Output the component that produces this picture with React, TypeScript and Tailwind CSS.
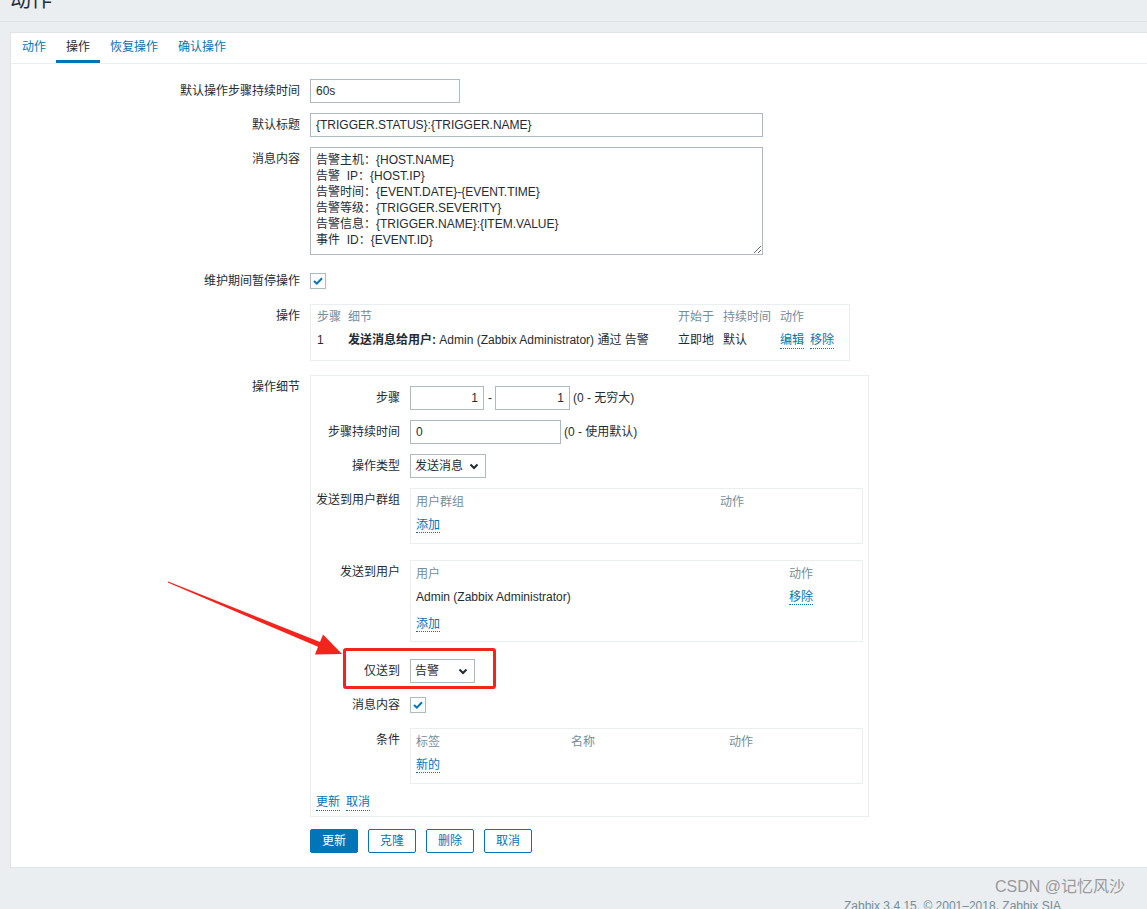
import React from "react";

function Chevron() {
  return (
    <svg width="10" height="7" viewBox="0 0 10 7" className="shrink-0">
      <path d="M1.5 1.5 L5 5 L8.5 1.5" fill="none" stroke="#1f2c33" strokeWidth="2" />
    </svg>
  );
}

function Check() {
  return (
    <div className="flex h-[16px] w-[16px] items-center justify-center border border-[#acbbc2] bg-white">
      <svg width="10" height="8" viewBox="0 0 10 8">
        <path d="M1 4 L3.8 6.6 L9 1.2" fill="none" stroke="#0275b8" strokeWidth="2" />
      </svg>
    </div>
  );
}

function A({ children }: { children: React.ReactNode }) {
  return <span className="border-b border-dotted border-[#0275b8] text-[#0275b8]">{children}</span>;
}

function Row({
  label,
  children,
  mb = "mb-[10px]",
}: {
  label: string;
  children: React.ReactNode;
  mb?: string;
}) {
  return (
    <div className={"flex " + mb}>
      <div className="w-[299px] shrink-0 pr-[10px] pt-[4px] text-right">{label}</div>
      <div>{children}</div>
    </div>
  );
}

function SubRow({
  label,
  children,
  mb = "mb-[10px]",
  extra,
}: {
  label: string;
  children: React.ReactNode;
  mb?: string;
  extra?: React.ReactNode;
}) {
  return (
    <div className={"relative flex " + mb}>
      {extra}
      <div className="w-[99px] shrink-0 pr-[10px] pt-[4px] text-right">{label}</div>
      <div>{children}</div>
    </div>
  );
}

const inputCls =
  "h-[24px] border border-[#acbbc2] bg-white px-[5px] text-[12px] text-[#1f2c33] outline-none";

export default function App() {
  const msg =
    "告警主机：{HOST.NAME}\n告警  IP：{HOST.IP}\n告警时间：{EVENT.DATE}-{EVENT.TIME}\n告警等级：{TRIGGER.SEVERITY}\n告警信息：{TRIGGER.NAME}:{ITEM.VALUE}\n事件  ID：{EVENT.ID}";

  return (
    <div className="relative h-[909px] w-[1147px] overflow-hidden bg-[#ebeef0] font-['Liberation_Sans','Noto_Sans_CJK_SC',sans-serif] text-[12px] leading-[16px] text-[#1f2c33]">
      <div className="flex h-[22px] items-start border-b border-[#dde3e6] pl-[10px]">
        <div className="-mt-[14px] text-[21px] leading-[26px]">动作</div>
      </div>

      <div className="ml-[10px] mt-[10px] w-[1160px] border border-[#dfe4e7] bg-white">
        <div className="flex h-[31px] border-b border-[#ebeef0] pl-[1px]">
          <div className="flex h-[30px] items-center border-b-[3px] border-transparent px-[10px] text-[#0275b8]">动作</div>
          <div className="flex h-[30px] items-center border-b-[3px] border-[#0275b8] px-[10px]">操作</div>
          <div className="flex h-[30px] items-center border-b-[3px] border-transparent px-[10px] text-[#0275b8]">恢复操作</div>
          <div className="flex h-[30px] items-center border-b-[3px] border-transparent px-[10px] text-[#0275b8]">确认操作</div>
        </div>

        <div className="pb-[14px] pt-[15px]">
          <Row label="默认操作步骤持续时间">
            <input readOnly defaultValue="60s" className={inputCls + " w-[150px]"} />
          </Row>
          <Row label="默认标题">
            <input readOnly defaultValue="{TRIGGER.STATUS}:{TRIGGER.NAME}" className={inputCls + " w-[453px]"} />
          </Row>
          <Row label="消息内容" mb="mb-[14px]">
            <textarea
              readOnly
              defaultValue={msg}
              className="block h-[108px] w-[453px] border border-[#acbbc2] bg-white px-[5px] py-[4px] text-[12px] leading-[16px] text-[#1f2c33] outline-none"
            />
          </Row>
          <Row label="维护期间暂停操作" mb="mb-[11px]">
            <div className="h-[24px] pt-[4px]">
              <Check />
            </div>
          </Row>
          <Row label="操作" mb="mb-[14px]">
            <div className="w-[540px] border border-[#ebeef0] pb-[11px] pl-[6px] pt-[4px]">
              <div className="grid grid-cols-[31px_330px_45px_57px_1fr] text-[#768d99]">
                <div>步骤</div>
                <div>细节</div>
                <div>开始于</div>
                <div>持续时间</div>
                <div>动作</div>
              </div>
              <div className="mt-[7px] grid grid-cols-[31px_330px_45px_57px_1fr]">
                <div>1</div>
                <div>
                  <span className="font-bold">发送消息给用户:</span> Admin (Zabbix Administrator) 通过 告警
                </div>
                <div>立即地</div>
                <div>默认</div>
                <div className="flex gap-[6px]">
                  <A>编辑</A>
                  <A>移除</A>
                </div>
              </div>
            </div>
          </Row>
          <Row label="操作细节" mb="mb-[12px]">
            <div className="w-[559px] border border-[#ebeef0] pb-[5px] pt-[10px]">
              <SubRow label="步骤">
                <div className="flex items-center">
                  <input readOnly defaultValue="1" className={inputCls + " w-[74px] text-right"} />
                  <span className="ml-[4px] mr-[3px]">-</span>
                  <input readOnly defaultValue="1" className={inputCls + " w-[75px] text-right"} />
                  <span className="ml-[3px]">(0 - 无穷大)</span>
                </div>
              </SubRow>
              <SubRow label="步骤持续时间">
                <div className="flex items-center">
                  <input readOnly defaultValue="0" className={inputCls + " w-[151px]"} />
                  <span className="ml-[3px]">(0 - 使用默认)</span>
                </div>
              </SubRow>
              <SubRow label="操作类型">
                <div className="flex h-[24px] w-[76px] items-center justify-between border border-[#acbbc2] pl-[4px] pr-[6px]">
                  <span>发送消息</span>
                  <Chevron />
                </div>
              </SubRow>
              <SubRow label="发送到用户群组" mb="mb-[16px]">
                <div className="w-[453px] border border-[#ebeef0] pb-[10px] pl-[5px] pt-[5px]">
                  <div className="grid grid-cols-[304px_1fr] text-[#768d99]">
                    <div>用户群组</div>
                    <div>动作</div>
                  </div>
                  <div className="mt-[7px]">
                    <A>添加</A>
                  </div>
                </div>
              </SubRow>
              <SubRow label="发送到用户" mb="mb-[17px]">
                <div className="w-[453px] border border-[#ebeef0] pb-[9px] pl-[5px] pt-[5px]">
                  <div className="grid grid-cols-[373px_1fr] text-[#768d99]">
                    <div>用户</div>
                    <div>动作</div>
                  </div>
                  <div className="mt-[7px] grid grid-cols-[373px_1fr]">
                    <div>Admin (Zabbix Administrator)</div>
                    <div>
                      <A>移除</A>
                    </div>
                  </div>
                  <div className="mt-[11px]">
                    <A>添加</A>
                  </div>
                </div>
              </SubRow>
              <SubRow
                label="仅送到"
                extra={
                  <div className="absolute left-[32px] top-[-11px] h-[41px] w-[153px] rounded-[3px] border-[3px] border-[#f3231d]" />
                }
              >
                <div className="flex h-[24px] w-[65px] items-center justify-between border border-[#acbbc2] pl-[4px] pr-[6px]">
                  <span>告警</span>
                  <Chevron />
                </div>
              </SubRow>
              <SubRow label="消息内容" mb="mb-[11px]">
                <div className="h-[24px] pt-[4px]">
                  <Check />
                </div>
              </SubRow>
              <SubRow label="条件">
                <div className="w-[453px] border border-[#ebeef0] pb-[10px] pl-[5px] pt-[5px]">
                  <div className="grid grid-cols-[155px_158px_1fr] text-[#768d99]">
                    <div>标签</div>
                    <div>名称</div>
                    <div>动作</div>
                  </div>
                  <div className="mt-[7px]">
                    <A>新的</A>
                  </div>
                </div>
              </SubRow>
              <div className="flex gap-[6px] pl-[5px]">
                <A>更新</A>
                <A>取消</A>
              </div>
            </div>
          </Row>
          <div className="flex gap-[10px] pl-[299px]">
            <div className="flex h-[24px] items-center rounded-[2px] border border-[#0275b8] bg-[#0275b8] px-[11px] text-white">更新</div>
            <div className="flex h-[24px] items-center rounded-[2px] border border-[#0275b8] bg-white px-[11px] text-[#0275b8]">克隆</div>
            <div className="flex h-[24px] items-center rounded-[2px] border border-[#0275b8] bg-white px-[11px] text-[#0275b8]">删除</div>
            <div className="flex h-[24px] items-center rounded-[2px] border border-[#0275b8] bg-white px-[11px] text-[#0275b8]">取消</div>
          </div>
        </div>
      </div>

      <div className="mt-[31px] pr-[86px] text-right leading-[14px] text-[#768d99]">
        Zabbix 3.4.15. © 2001–2018, Zabbix SIA
      </div>

      <div className="absolute left-[995px] top-[877px] text-[16px] leading-[20px] text-[#9a9a9a]">CSDN @记忆风沙</div>

      <svg className="pointer-events-none absolute left-0 top-0" width="1147" height="909" viewBox="0 0 1147 909">
        <polygon
          points="167.8,582.5 318,646.8 315,654.5 342,654 323,634.5 320,642.1 168.2,581.5"
          fill="#f3231d"
        />
      </svg>
    </div>
  );
}
